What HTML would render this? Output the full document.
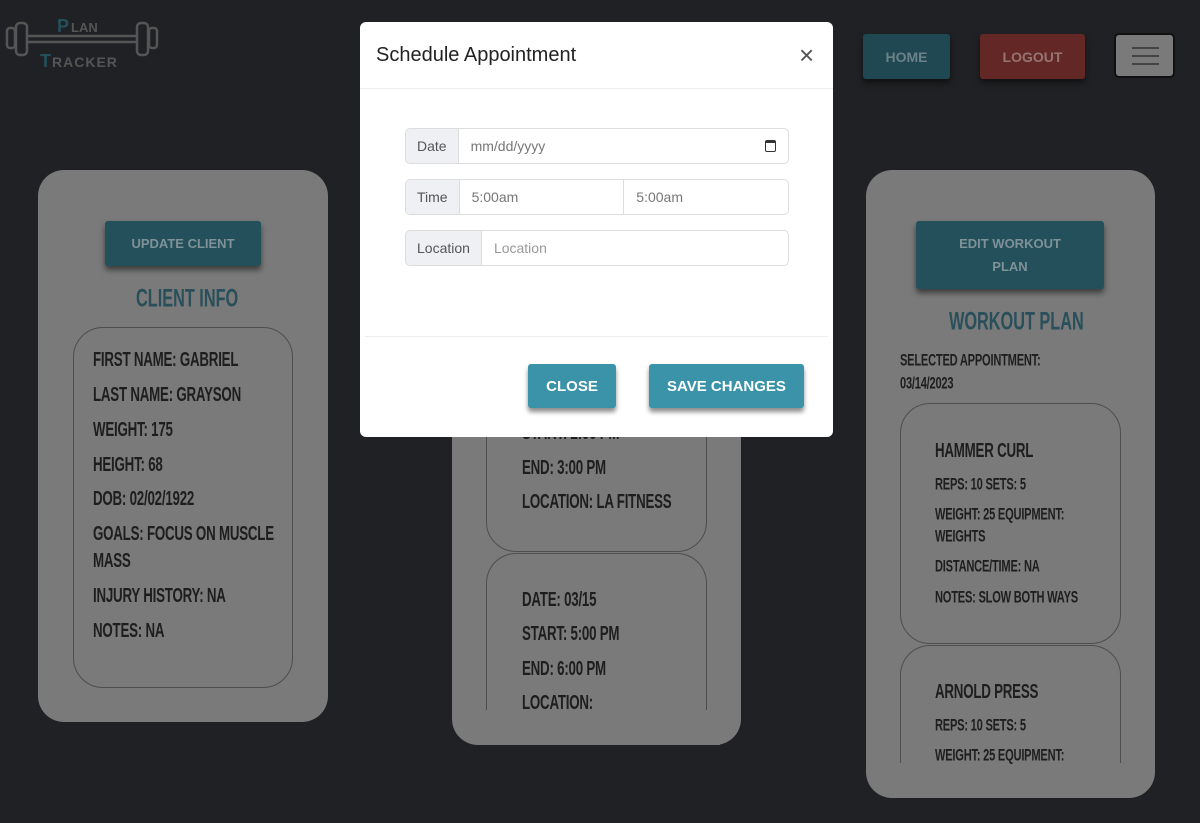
<!DOCTYPE html>
<html><head><style>
body{margin:0;width:1200px;height:823px;background:#202124;position:relative;overflow:hidden;font-family:"Liberation Sans",sans-serif}
.n{font-family:"Liberation Sans",sans-serif;font-weight:bold;text-transform:uppercase;color:#1e1e1e}
.card{position:absolute;background:#7a7a7a;border-radius:26px}
.inner{position:absolute;border:1.5px solid #4e4e4e;border-radius:30px}
.line{position:absolute;font-size:18px;letter-spacing:-0.3px;transform:scale(0.74,1.12);transform-origin:left top;white-space:nowrap}
.btn{position:absolute;background:#23505b;color:#7f9297;font-weight:bold;font-size:14px;display:flex;align-items:center;justify-content:center;text-align:center;border-radius:3px;box-shadow:0 4px 6px rgba(0,0,0,.5)}
.h{position:absolute;color:#294f5b;font-size:22px;transform:scale(0.74,1.12);transform-origin:left top;white-space:nowrap}
.grp{position:absolute;left:405px;width:382px;height:34px;border:1px solid #ddd;border-radius:5px;display:flex;font-size:14px;color:#666;overflow:hidden}
.grp .l{background:#eef0f3;border-right:1px solid #ddd;display:flex;align-items:center;padding:0 11px;color:#555}
.grp .f{display:flex;align-items:center;padding:0 12px;flex:1;color:#777}
.mb{position:absolute;background:#3b93a9;color:#fff;font-weight:bold;font-size:15px;display:flex;align-items:center;justify-content:center;border-radius:3px;box-shadow:0 4px 5px rgba(0,0,0,.45)}
</style></head><body>
<svg style="position:absolute;left:3px;top:14px" width="158" height="56" viewBox="0 0 158 56">
<g fill="none" stroke="#555" stroke-width="2.5">
<rect x="4" y="14" width="8" height="20" rx="3"/><rect x="13" y="9" width="11" height="32" rx="4"/>
<rect x="134" y="9" width="11" height="32" rx="4"/><rect x="146" y="14" width="8" height="20" rx="3"/>
<line x1="24" y1="22" x2="134" y2="22"/><line x1="24" y1="28" x2="134" y2="28"/></g>
<text x="54" y="18" font-family="Liberation Sans" font-weight="bold" font-size="18" fill="#23505b">P</text>
<text x="68" y="18" font-family="Liberation Sans" font-weight="bold" font-size="13" fill="#555">LAN</text>
<text x="37" y="53" font-family="Liberation Sans" font-weight="bold" font-size="18" fill="#23505b">T</text>
<text x="49" y="53" font-family="Liberation Sans" font-weight="bold" font-size="14" fill="#555" letter-spacing="1">RACKER</text>
</svg>
<div class="btn" style="left:863px;top:34px;width:87px;height:45px;background:#1f4853;color:#6a8288">HOME</div>
<div class="btn" style="left:980px;top:34px;width:105px;height:45px;background:#632826;color:#957472">LOGOUT</div>
<div style="position:absolute;left:1114px;top:33px;width:61px;height:45px;background:#7a7a7a;border:2px solid #111;border-radius:5px;box-sizing:border-box">
<div style="position:absolute;left:16px;top:12px;width:27px;height:2px;background:#444;box-shadow:0 8px 0 #444,0 16px 0 #444"></div></div>

<div class="card" style="left:38px;top:170px;width:290px;height:552px"></div>
<div class="btn" style="left:105px;top:221px;width:156px;height:45px;font-size:13px">UPDATE CLIENT</div>
<div class="h n" style="left:136px;top:284px;color:#294f5b">CLIENT INFO</div>
<div class="inner" style="left:73px;top:327px;width:218px;height:359px"></div>
<div class="n">
<div class="line" style="left:93px;top:348px">First Name: Gabriel</div>
<div class="line" style="left:93px;top:383px">Last Name: Grayson</div>
<div class="line" style="left:93px;top:418px">Weight: 175</div>
<div class="line" style="left:93px;top:453px">Height: 68</div>
<div class="line" style="left:93px;top:487px">DOB: 02/02/1922</div>
<div class="line" style="left:93px;top:522px">Goals: Focus on muscle</div>
<div class="line" style="left:93px;top:549px">mass</div>
<div class="line" style="left:93px;top:584px">Injury History: NA</div>
<div class="line" style="left:93px;top:619px">Notes: NA</div>
</div>

<div class="card" style="left:452px;top:300px;width:289px;height:445px"></div>
<div class="inner" style="left:486px;top:300px;width:219px;height:250px"></div>
<div class="inner" style="left:486px;top:553px;width:219px;height:200px;border-bottom:none;border-radius:30px 30px 0 0"></div>
<div style="position:absolute;left:480px;top:710px;width:240px;height:60px;background:#7a7a7a;border-radius:0 0 20px 20px"></div>
<div style="position:absolute;left:452px;top:745px;width:289px;height:30px;background:#202124"></div>
<div class="n">
<div class="line" style="left:522px;top:421px">Start: 2:00 PM</div>
<div class="line" style="left:522px;top:456px">End: 3:00 PM</div>
<div class="line" style="left:522px;top:490px">Location: LA Fitness</div>
<div class="line" style="left:522px;top:588px">Date: 03/15</div>
<div class="line" style="left:522px;top:622px">Start: 5:00 PM</div>
<div class="line" style="left:522px;top:657px">End: 6:00 PM</div>
<div class="line" style="left:522px;top:691px">Location:</div>
</div>

<div class="card" style="left:866px;top:170px;width:289px;height:628px"></div>
<div class="btn" style="left:916px;top:221px;width:188px;height:68px;font-size:13px;line-height:23px">EDIT WORKOUT<br>PLAN</div>
<div class="h n" style="left:949px;top:307px;color:#294f5b">Workout Plan</div>
<div class="n">
<div class="line" style="left:900px;top:351px;font-size:15px">Selected Appointment:</div>
<div class="line" style="left:900px;top:374px;font-size:15px">03/14/2023</div>
</div>
<div class="inner" style="left:900px;top:403px;width:219px;height:239px"></div>
<div class="inner" style="left:900px;top:645px;width:219px;height:140px;border-bottom:none;border-radius:30px 30px 0 0"></div>
<div style="position:absolute;left:895px;top:763px;width:240px;height:30px;background:#7a7a7a"></div>
<div class="n">
<div class="line" style="left:935px;top:439px">Hammer Curl</div>
<div class="line" style="left:935px;top:475px;font-size:15px">Reps: 10 Sets: 5</div>
<div class="line" style="left:935px;top:505px;font-size:15px">Weight: 25 Equipment:</div>
<div class="line" style="left:935px;top:527px;font-size:15px">Weights</div>
<div class="line" style="left:935px;top:557px;font-size:15px">Distance/Time: NA</div>
<div class="line" style="left:935px;top:588px;font-size:15px">Notes: Slow both ways</div>
<div class="line" style="left:935px;top:680px">Arnold Press</div>
<div class="line" style="left:935px;top:716px;font-size:15px">Reps: 10 Sets: 5</div>
<div class="line" style="left:935px;top:746px;font-size:15px">Weight: 25 Equipment:</div>
</div>

<div style="position:absolute;left:360px;top:22px;width:473px;height:415px;background:#fff;border-radius:6px"></div>
<div style="position:absolute;left:376px;top:44px;font-size:20px;color:#222">Schedule Appointment</div>
<div style="position:absolute;left:799px;top:40px;font-size:26px;color:#555;font-weight:300">×</div>
<div style="position:absolute;left:360px;top:88px;width:473px;height:1px;background:#eee"></div>
<div class="grp" style="top:128px"><div class="l">Date</div><div class="f">mm/dd/yyyy<span style="margin-left:auto;border:1.5px solid #333;border-radius:2px;width:9px;height:8px;border-top-width:3px"></span></div></div>
<div class="grp" style="top:179px"><div class="l">Time</div><div class="f" style="border-right:1px solid #ddd">5:00am</div><div class="f">5:00am</div></div>
<div class="grp" style="top:230px"><div class="l">Location</div><div class="f" style="color:#999">Location</div></div>
<div style="position:absolute;left:365px;top:336px;width:463px;height:1px;background:#eee"></div>
<div class="mb" style="left:528px;top:364px;width:88px;height:44px">CLOSE</div>
<div class="mb" style="left:649px;top:364px;width:155px;height:44px">SAVE CHANGES</div>
</body></html>
